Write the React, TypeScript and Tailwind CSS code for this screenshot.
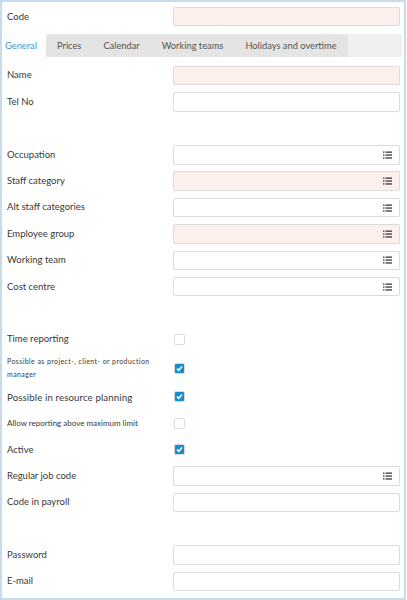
import React from "react";

const font = { fontFamily: "Lato, 'Open Sans', sans-serif" };

function ListIcon() {
  return (
    <svg width="9" height="8" viewBox="0 0 9 8" className="shrink-0">
      <g fill="#3a3a3a">
        <rect x="0" y="0.5" width="1.5" height="1.3" />
        <rect x="2.5" y="0.5" width="6.5" height="1.3" />
        <rect x="0" y="3.4" width="1.5" height="1.3" />
        <rect x="2.5" y="3.4" width="6.5" height="1.3" />
        <rect x="0" y="6.3" width="1.5" height="1.3" />
        <rect x="2.5" y="6.3" width="6.5" height="1.3" />
      </g>
    </svg>
  );
}

function Input({ pink, list }: { pink?: boolean; list?: boolean }) {
  return (
    <div
      className={`ml-auto w-[227px] h-[19.5px] rounded-[2px] border border-[#dcdcdc] flex items-center justify-end pr-[7px] ${
        pink ? "bg-[#fdefeb]" : "bg-white"
      }`}
    >
      {list && <ListIcon />}
    </div>
  );
}

function Check({ checked }: { checked?: boolean }) {
  if (checked)
    return (
      <div className="w-[11px] h-[11px] rounded-[2px] border border-[#d8d8d8] bg-[#1b8bcf] flex items-center justify-center">
        <svg width="7" height="7" viewBox="0 0 7 7">
          <path d="M1 3.6 L2.8 5.3 L6 1.4" stroke="white" strokeWidth="1.5" fill="none" />
        </svg>
      </div>
    );
  return <div className="w-[11px] h-[11px] rounded-[2px] border border-[#dcdcdc] bg-white" />;
}

function Row({
  label,
  children,
  h = "h-[26.4px]",
  labelClass = "text-[9.5px]",
}: {
  label: React.ReactNode;
  children?: React.ReactNode;
  h?: string;
  labelClass?: string;
}) {
  return (
    <div className={`flex items-center ${h}`}>
      <div className={`pl-[5px] w-[171px] text-[#383838] ${labelClass}`}>{label}</div>
      <div className="flex-1 flex items-center pr-[4px]">{children}</div>
    </div>
  );
}

function CheckCell({ checked }: { checked?: boolean }) {
  return (
    <div className="pl-[1px]">
      <Check checked={checked} />
    </div>
  );
}

const Spacer = () => <div className="h-[26.4px]" />;

export default function App() {
  const tabs = ["Prices", "Calendar", "Working teams", "Holidays and overtime"];
  return (
    <div className="w-[407px] h-[600px] bg-white" style={font}>
      <div className="w-[406px] h-[600px] border-2 border-[#c6dbee] flex flex-col overflow-hidden">
        <div className="pt-[1.5px]">
          <Row label="Code">
            <Input pink />
          </Row>
        </div>
        <div className="mt-[4.5px] h-[23px] flex items-stretch bg-[#f0f0f0] mr-[2px]">
          <div className="bg-white w-[44px] pl-[3px] flex items-center text-[9.3px] text-[#3d9ad4]">General</div>
          <div className="flex bg-[#e4e4e4] rounded-t-[4px]">
            {tabs.map((t) => (
              <div key={t} className="px-[11px] flex items-center text-[9.3px] text-[#555]">
                {t}
              </div>
            ))}
          </div>
        </div>
        <div className="h-[5px]" />
        <Row label="Name">
          <Input pink />
        </Row>
        <Row label="Tel No">
          <Input />
        </Row>
        <Spacer />
        <Row label="Occupation">
          <Input list />
        </Row>
        <Row label="Staff category">
          <Input pink list />
        </Row>
        <Row label="Alt staff categories">
          <Input list />
        </Row>
        <Row label="Employee group">
          <Input pink list />
        </Row>
        <Row label="Working team">
          <Input list />
        </Row>
        <Row label="Cost centre">
          <Input list />
        </Row>
        <Spacer />
        <Row label="Time reporting">
          <CheckCell />
        </Row>
        <Row
          h="h-[31px]"
          labelClass="text-[7px] leading-[13px] tracking-[0.4px]"
          label={
            <>
              Possible as project-, client- or production
              <br />
              manager
            </>
          }
        >
          <CheckCell checked />
        </Row>
        <Row label="Possible in resource planning" labelClass="text-[9.7px] tracking-[0.1px]">
          <CheckCell checked />
        </Row>
        <Row label="Allow reporting above maximum limit" labelClass="text-[8px]">
          <CheckCell />
        </Row>
        <Row label="Active">
          <CheckCell checked />
        </Row>
        <Row label="Regular job code">
          <Input list />
        </Row>
        <Row label="Code in payroll">
          <Input />
        </Row>
        <Spacer />
        <Row label="Password">
          <Input />
        </Row>
        <Row label="E-mail">
          <Input />
        </Row>
      </div>
    </div>
  );
}
